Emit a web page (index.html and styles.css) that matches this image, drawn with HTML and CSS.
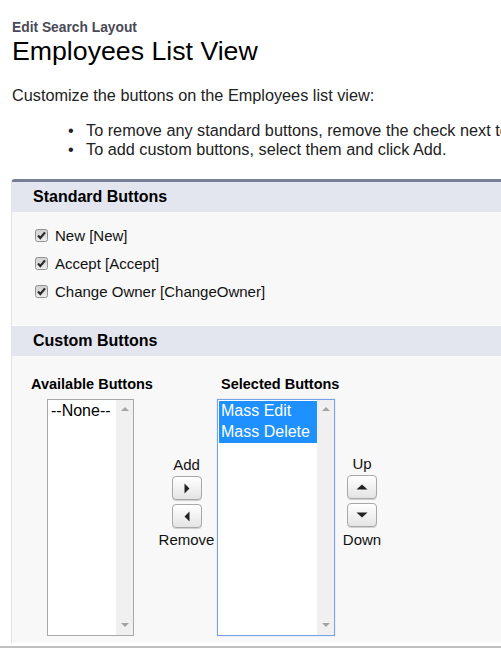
FILE: index.html
```html
<!DOCTYPE html>
<html>
<head>
<meta charset="utf-8">
<link rel="stylesheet" href="styles.css">
</head>
<body>
<div class="page">
  <div class="subtitle">Edit Search Layout</div>
  <h1 class="title">Employees List View</h1>
  <p class="intro">Customize the buttons on the Employees list view:</p>
  <ul class="tips">
    <li>To remove any standard buttons, remove the check next to the button name.</li>
    <li>To add custom buttons, select them and click Add.</li>
  </ul>
</div>
<div class="panel">
  <div class="sec-head">Standard Buttons</div>
  <div class="std-body">
    <label class="cb-row"><span class="cb"><svg width="13" height="13" viewBox="0 0 13 13"><defs><linearGradient id="g" x1="0" y1="0" x2="0" y2="1"><stop offset="0" stop-color="#cfcfcf"/><stop offset="1" stop-color="#eeeeee"/></linearGradient></defs><rect x="0.5" y="0.5" width="12" height="12" rx="2" fill="url(#g)" stroke="#939393"/><path d="M3 6.6 L5.3 9 L10 3.4" fill="none" stroke="#2a2a2a" stroke-width="2.2"/></svg></span>New [New]</label>
    <label class="cb-row"><span class="cb"><svg width="13" height="13" viewBox="0 0 13 13"><rect x="0.5" y="0.5" width="12" height="12" rx="2" fill="url(#g)" stroke="#939393"/><path d="M3 6.6 L5.3 9 L10 3.4" fill="none" stroke="#2a2a2a" stroke-width="2.2"/></svg></span>Accept [Accept]</label>
    <label class="cb-row"><span class="cb"><svg width="13" height="13" viewBox="0 0 13 13"><rect x="0.5" y="0.5" width="12" height="12" rx="2" fill="url(#g)" stroke="#939393"/><path d="M3 6.6 L5.3 9 L10 3.4" fill="none" stroke="#2a2a2a" stroke-width="2.2"/></svg></span>Change Owner [ChangeOwner]</label>
  </div>
  <div class="sec-head sec-head2">Custom Buttons</div>
  <div class="custom-body">
    <div class="col col-avail">
      <div class="col-label">Available Buttons</div>
      <div class="listbox avail">
        <div class="options"><div class="opt">--None--</div></div>
        <div class="sbar"><span class="arr-up"></span><span class="arr-down"></span></div>
      </div>
    </div>
    <div class="col col-move">
      <div class="mv-label">Add</div>
      <div class="btn"><svg width="6" height="11" viewBox="0 0 6 11"><path d="M0.5 0.5 L5.5 5.5 L0.5 10.5 Z" fill="#222"/></svg></div>
      <div class="btn btn2"><svg width="6" height="11" viewBox="0 0 6 11"><path d="M5.5 0.5 L0.5 5.5 L5.5 10.5 Z" fill="#222"/></svg></div>
      <div class="mv-label mv-bottom">Remove</div>
    </div>
    <div class="col col-sel">
      <div class="col-label sel-label">Selected Buttons</div>
      <div class="listbox sel">
        <div class="options"><div class="opt on">Mass Edit</div><div class="opt on">Mass Delete</div></div>
        <div class="sbar"><span class="arr-up"></span><span class="arr-down"></span></div>
      </div>
    </div>
    <div class="col col-order">
      <div class="mv-label">Up</div>
      <div class="btn"><svg width="12" height="6" viewBox="0 0 12 6"><path d="M0.5 5.5 L6 0.5 L11.5 5.5 Z" fill="#222"/></svg></div>
      <div class="btn btn2"><svg width="12" height="6" viewBox="0 0 12 6"><path d="M0.5 0.5 L6 5.5 L11.5 0.5 Z" fill="#222"/></svg></div>
      <div class="mv-label mv-bottom2">Down</div>
    </div>
  </div>
</div>
<div class="foot-gap"></div>
<div class="foot-bar"></div>
</body>
</html>
```
FILE: styles.css
```css
html, body {
  margin: 0;
  padding: 0;
  overflow: hidden;
  background: #fff;
}
body {
  font-family: "Liberation Sans", Arial, sans-serif;
  color: #000;
  width: 501px;
}
.page {
  padding: 20px 0 0 12px;
  white-space: nowrap;
  overflow: hidden;
}
.subtitle {
  font-size: 13.8px;
  font-weight: bold;
  line-height: 16px;
  color: #4a4a56;
}
.title {
  margin: 0;
  font-size: 26.7px;
  font-weight: normal;
  line-height: 30px;
  color: #000;
}
.intro {
  margin: 20px 0 0 0;
  font-size: 16.25px;
  line-height: 19px;
  color: #222;
}
.tips {
  margin: 16px 0 0 0;
  padding-left: 56px;
  list-style: none;
  font-size: 16.25px;
  line-height: 19px;
  color: #222;
}
.tips li::before {
  content: "\2022";
  display: inline-block;
  width: 18px;
}
.panel {
  margin: 20px 0 0 11px;
  border-top: 3px solid #767e93;
  border-left: 1px solid #e3e3e3;
  border-top-left-radius: 4px;
  background: #f8f8f8;
}
.sec-head {
  height: 30px;
  line-height: 30px;
  background: #e3e6ee;
  font-size: 16px;
  font-weight: bold;
  padding-left: 21px;
  color: #000;
}
.sec-head2 {
  border-top: 1px solid #fff;
}
.std-body {
  padding: 10px 0 19px 23px;
}
.cb-row {
  display: flex;
  align-items: center;
  height: 28px;
  font-size: 15px;
  line-height: 28px;
  color: #111;
}
.cb {
  display: flex;
  width: 13px;
  height: 13px;
  margin-right: 7px;
  margin-top: -2px;
}
.custom-body {
  display: flex;
  align-items: flex-start;
  padding: 20px 0 7px 19px;
}
.col {
  display: flex;
  flex-direction: column;
}
.col-avail {
  width: 121px;
  align-items: flex-start;
}
.col-label {
  font-size: 14.5px;
  font-weight: bold;
  line-height: 17px;
  margin-bottom: 6px;
  white-space: nowrap;
  color: #000;
}
.sel-label {
  margin-left: 4px;
}
.listbox {
  display: flex;
  height: 237px;
  box-sizing: border-box;
  background: #fff;
}
.avail {
  width: 87px;
  margin-left: 16px;
  border: 1px solid #a9a9a9;
}
.sel {
  width: 118px;
  border: 1px solid #7aa3e6;
  box-shadow: 0 0 1px #a8c4f0;
}
.options {
  flex: 1;
  padding-top: 1px;
  padding-left: 1px;
}
.opt {
  font-size: 16px;
  line-height: 20.8px;
  padding-left: 2px;
  white-space: nowrap;
  color: #000;
}
.opt.on {
  background: #1e90ff;
  color: #fff;
}
.sbar {
  width: 17px;
  background: #f0f0f0;
  display: flex;
  flex-direction: column;
  justify-content: space-between;
  align-items: center;
  padding: 7px 0 8px 0;
}
.arr-up {
  width: 0;
  height: 0;
  border-left: 4px solid transparent;
  border-right: 4px solid transparent;
  border-bottom: 4px solid #a3a3a3;
}
.arr-down {
  width: 0;
  height: 0;
  border-left: 4px solid transparent;
  border-right: 4px solid transparent;
  border-top: 4px solid #a3a3a3;
}
.col-move {
  width: 61px;
  padding-left: 4px;
  align-items: center;
  margin-top: 80px;
}
.col-sel {
  width: 121px;
  align-items: flex-start;
}
.col-order {
  width: 48px;
  align-items: center;
  margin-top: 79px;
}
.mv-label {
  font-size: 15px;
  line-height: 17px;
  color: #111;
  margin-bottom: 3px;
}
.mv-bottom {
  margin: 3px 0 0 0;
}
.mv-bottom2 {
  margin: 4px 0 0 0;
}
.btn {
  width: 30px;
  height: 24px;
  box-sizing: border-box;
  border: 1px solid #a8a8a8;
  border-radius: 4px;
  background: linear-gradient(#ffffff, #e4e4e4);
  box-shadow: 0 1px 0 #d0d0d0;
  display: flex;
  align-items: center;
  justify-content: center;
}
.btn2 {
  margin-top: 4px;
}
.foot-gap {
  height: 3px;
}
.foot-bar {
  height: 6px;
  background: #c0c0c0;
}
```
